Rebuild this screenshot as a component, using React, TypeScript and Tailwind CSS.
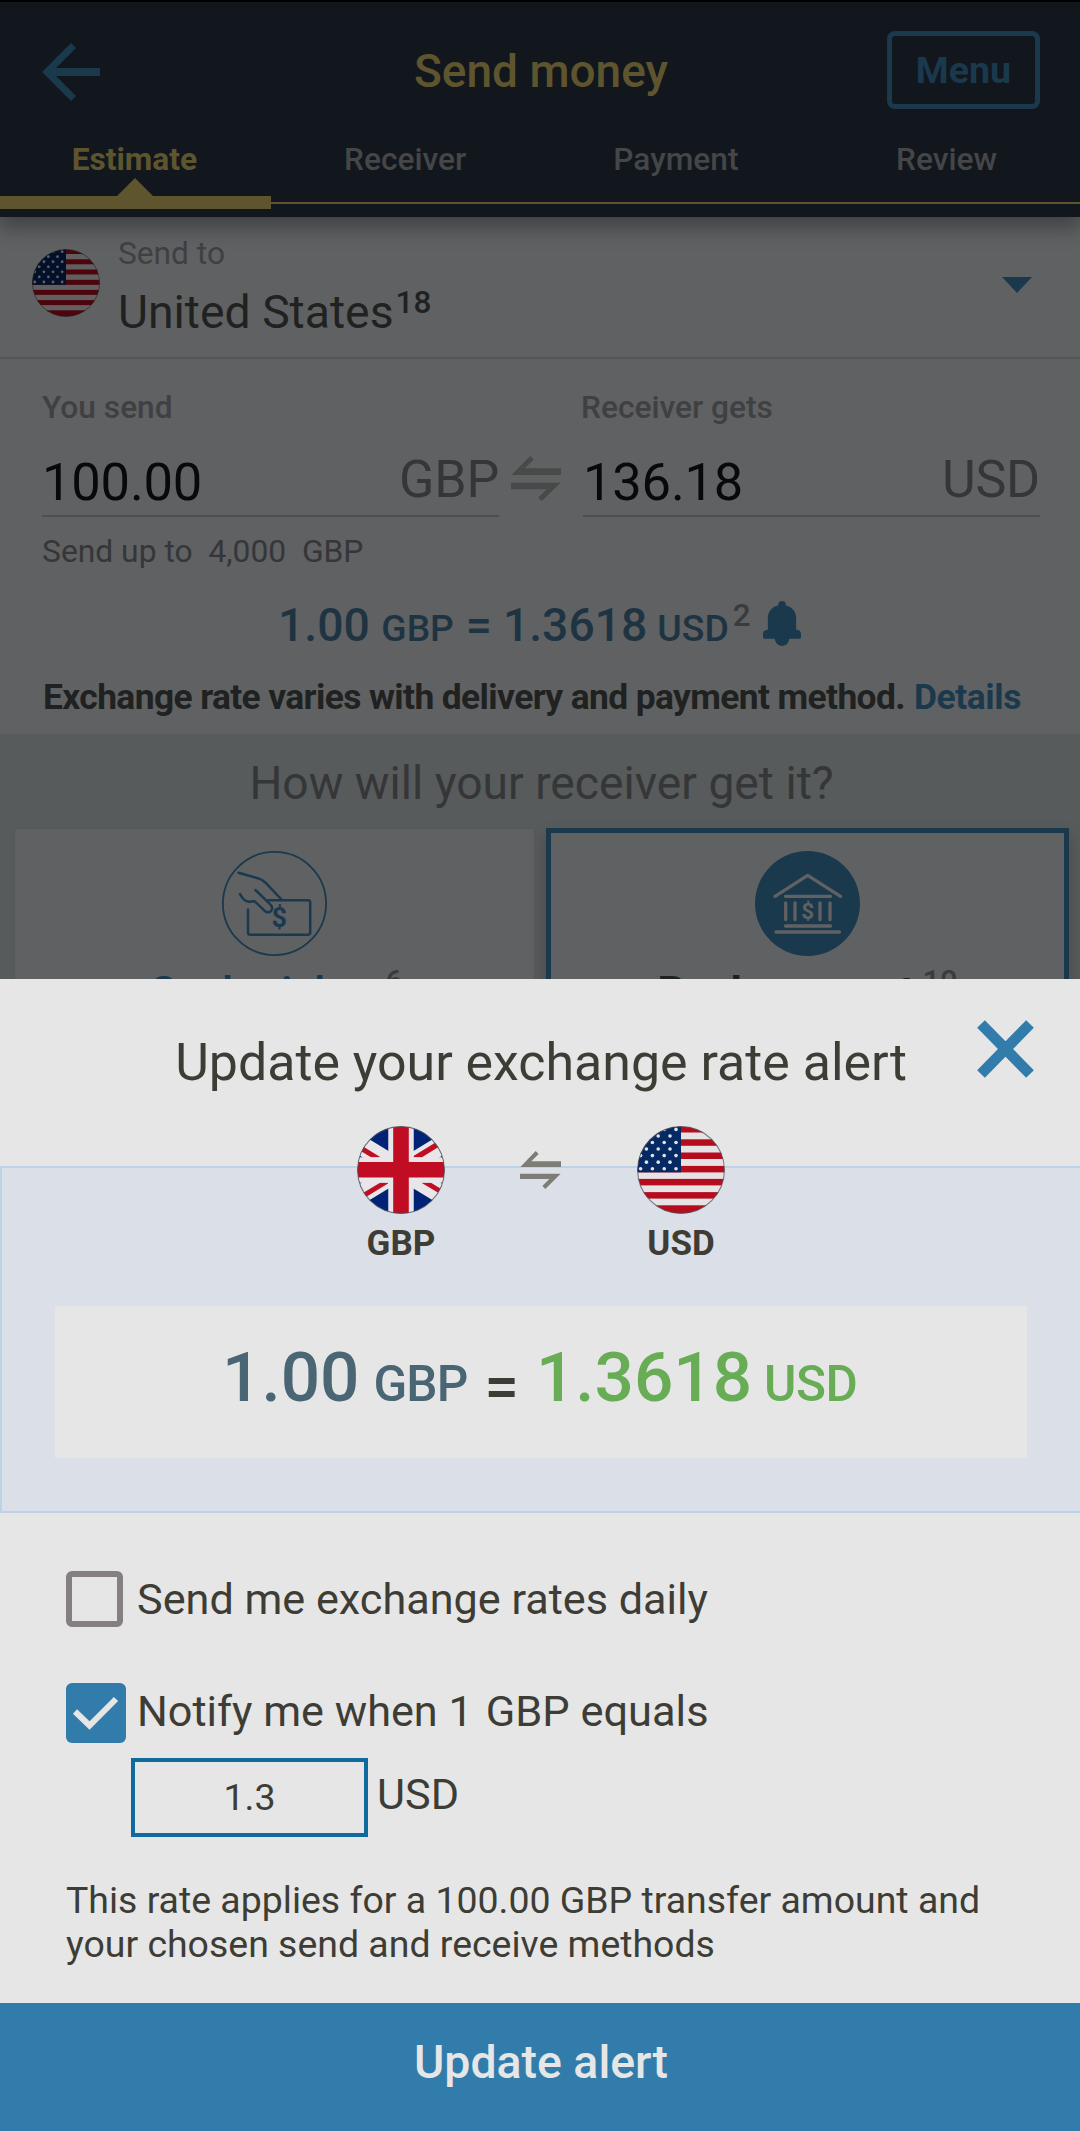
import type { ReactNode } from "react";

function UsFlag({ className }: { className: string }) {
  const stripes = [0, 13.3, 26.5, 39.9, 52.9, 66.1, 79.3];
  const rows = [0, 1, 2, 3, 4, 5, 6];
  return (
    <svg viewBox="0 0 88 88" className={className}>
      <clipPath id="us-clip">
        <circle cx="44" cy="44" r="43.5" />
      </clipPath>
      <g clipPath="url(#us-clip)">
        <rect width="88" height="88" fill="#e6e3e5" />
        {stripes.map((y) => (
          <rect key={y} y={y} width="88" height={y > 79 ? 9 : 6.5} fill="#b60d1e" />
        ))}
        <rect width="44" height="46.3" fill="#052962" />
        {rows.map((r) =>
          [0, 1, 2, 3]
            .filter((c) => r % 2 === 0 || c < 3)
            .map((c) => (
              <circle
                key={`${r}-${c}`}
                cx={(r % 2 === 0 ? 3.6 : 9.4) + c * 11.8}
                cy={3.4 + r * 6.55}
                r="1.8"
                fill="#dfe3ea"
              />
            ))
        )}
      </g>
      <circle cx="44" cy="44" r="43.4" fill="none" stroke="#4a4d55" strokeOpacity="0.7" strokeWidth="1.1" />
    </svg>
  );
}

function UkFlag({ className }: { className: string }) {
  return (
    <svg viewBox="0 0 88 88" className={className}>
      <clipPath id="uk-clip">
        <circle cx="44" cy="44" r="43.5" />
      </clipPath>
      <g clipPath="url(#uk-clip)">
        <rect width="88" height="88" fill="#002376" />
        <path d="M-6 13.2 L94 74.2 M94 13.2 L-6 74.2" stroke="#e8e6e8" strokeWidth="19" />
        <path
          d="M-6 13.2 L24 31.5 H14.5 L-6 19 Z M94 13.2 L64.5 31.5 H54 V31.5 L94 7.2 Z M94 74.2 L64 56.5 H73.5 L94 68.8 Z M-6 74.2 L23.5 56.5 H31 V57.5 L-6 80.2 Z"
          fill="#c20d22"
        />
        <path d="M44 0 V88 M0 43.9 H88" stroke="#e8e6e8" strokeWidth="25.5" />
        <path d="M44 0 V88 M0 43.7 H88" stroke="#c00d24" strokeWidth="15.6" />
      </g>
      <circle cx="44" cy="44" r="43.4" fill="none" stroke="#4a4d55" strokeOpacity="0.7" strokeWidth="1.1" />
    </svg>
  );
}

function SwapIcon({ className }: { className: string }) {
  return (
    <svg viewBox="0 0 123 114" preserveAspectRatio="none" className={className} fill="currentColor">
      <path d="M1 48 L47 0 L56 9 L34 31 H123 V48 Z" />
      <path d="M122 68 L76 114 L67 105 L88 84 H0 V68 Z" />
    </svg>
  );
}

function BellIcon() {
  return (
    <svg viewBox="0 0 110 132" preserveAspectRatio="none" className="h-[45px] w-[38px]" fill="currentColor">
      <circle cx="55" cy="11" r="11" />
      <path d="M14 84 V50 C14 28 31 12 55 12 S96 28 96 50 V84 C104 84 110 88 110 96 V106 Q110 111 105 111 H5 Q0 111 0 106 V96 C0 88 6 84 14 84 Z" />
      <path d="M34 108 C34 122 43 132 55 132 S76 122 76 108 Z" />
    </svg>
  );
}

function CashIcon() {
  return (
    <svg viewBox="0 0 105 105" className="size-[105px] text-[#1b394d]" fill="none" stroke="currentColor">
      <circle cx="52.5" cy="52.5" r="51.6" strokeWidth="1.8" />
      <g strokeWidth="2.5" strokeLinecap="round" strokeLinejoin="round">
        <path d="M16.5 21.7 L37 27.6 Q40 28.5 43 31.2 L59.5 48.5" />
        <path d="M46.5 49.3 H86 Q88.2 49.3 88.2 51.5 V81.5 Q88.2 83.7 86 83.7 H28.2 Q26 83.7 26 81.5 V58.5" />
        <path d="M18 43 C20 47 22.5 50.5 27 50.8 L32.7 50.3 L42.5 59.7 Q46 62.6 49 60 Q51.6 57 48.5 53.6 L33.5 39" />
      </g>
      <text x="57.2" y="76.3" textAnchor="middle" fill="currentColor" stroke="none" className="font-[Roboto] text-[27px] font-bold">
        $
      </text>
    </svg>
  );
}

function BankIcon() {
  return (
    <svg viewBox="0 0 105 105" className="size-[105px]" fill="none" stroke="#606163">
      <circle cx="52.5" cy="52.5" r="52.5" fill="#1b394d" stroke="none" />
      <path
        d="M20 45.3 L52.7 24.3 L85.5 45.3 M30.5 45.3 H75.5 M30.7 52 V68.5 M40 52 V68.5 M65 52 V68.5 M75 52 V68.5 M30.5 75 H75.5 M21 81 H84.5"
        strokeWidth="3.3"
        strokeLinecap="round"
        strokeLinejoin="round"
      />
      <text x="52.8" y="68" textAnchor="middle" fill="#606163" stroke="none" className="font-[Roboto] text-[22.5px] font-bold">
        $
      </text>
    </svg>
  );
}

function Tab({ label, active = false }: { label: string; active?: boolean }) {
  return (
    <div className="relative flex flex-col">
      <div
        className={
          active
            ? "h-[58px] pr-[2px] text-center text-[31.7px] leading-[43px] font-bold text-[#5e552f]"
            : "h-[58px] pr-[2px] text-center text-[31.7px] leading-[43px] font-medium text-[#444647]"
        }
      >
        {label}
      </div>
      {active ? (
        <>
          <div className="h-[13px] bg-[#5e552f]" />
          <svg viewBox="0 0 36 18" className="absolute top-[40px] left-[117px] h-[18px] w-[36px]">
            <path d="M0 18 L18 0 L36 18 Z" fill="#5e552f" />
          </svg>
        </>
      ) : (
        <div className="mt-[6px] h-[2px] bg-[#5e552f]" />
      )}
    </div>
  );
}

function AmountField({ label, value, currency }: { label: ReactNode; value: string; currency: string }) {
  return (
    <div className="w-[457px]">
      <div className="text-[31.7px] leading-[36px] font-medium text-[#3f4042]">{label}</div>
      <div className="flex h-[91px] items-end justify-between border-b-2 border-[#4e4f50]">
        <span className="pb-[3px] text-[52.5px] leading-[60px] tracking-[-0.2px] text-[#070a0c]">{value}</span>
        <span className="pb-[5px] text-[52px] leading-[60px] tracking-[-0.2px] text-[#353638]">{currency}</span>
      </div>
    </div>
  );
}

function CurrencyBadge({ flag, code }: { flag: ReactNode; code: string }) {
  return (
    <div className="flex w-[88px] flex-col items-center">
      {flag}
      <div className="mt-[10px] text-[35px] leading-[40px] font-bold text-[#3d3d36]">{code}</div>
    </div>
  );
}

export default function App() {
  return (
    <div className="relative flex h-[2131px] w-[1080px] flex-col overflow-hidden bg-[#606163] font-[Roboto,sans-serif] whitespace-nowrap">
      <header className="relative z-10 h-[217px] shrink-0 border-t-2 border-black bg-[#12171e] shadow-[0_8px_20px_2px_rgba(0,0,0,0.35)]">
        <div className="flex h-[136px] items-center justify-between pr-[40px] pl-[42px]">
          <div className="w-[153px]">
            <svg viewBox="0 0 58 58" className="mt-[3px] size-[58px]" fill="none" stroke="#1b394d">
              <path d="M31.5 2.5 L5 29 L31.5 55.5" strokeWidth="7" />
              <path d="M4 29 H58" strokeWidth="7.8" />
            </svg>
          </div>
          <h1 className="pt-[2px] text-[46px] leading-[54px] font-medium text-[#5e552f]">Send money</h1>
          <button className="h-[78px] w-[153px] rounded-[8px] border-[5px] border-[#1b394d] text-[37.6px] leading-[65px] font-bold text-[#1b394d]">
            Menu
          </button>
        </div>
        <nav className="grid w-[1083px] grid-cols-4">
          <Tab label="Estimate" active />
          <Tab label="Receiver" />
          <Tab label="Payment" />
          <Tab label="Review" />
        </nav>
      </header>

      <section className="flex h-[142px] shrink-0 border-b-2 border-[#555658] pr-[48px] pl-8">
        <UsFlag className="mt-[32px] size-[68px] brightness-[0.42]" />
        <div className="ml-[18px] pt-[19px]">
          <div className="text-[31.7px] leading-[36px] text-[#3f4042]">Send to</div>
          <div className="mt-[13px] flex text-[#202121]">
            <span className="text-[46.3px] leading-[54px]">United States</span>
            <span className="ml-[2px] text-[31.5px] leading-[36px] font-medium">18</span>
          </div>
        </div>
        <svg viewBox="0 0 30 16" className="mt-[60px] ml-auto h-[16px] w-[30px]">
          <path d="M0 0 H30 L15 16 Z" fill="#1b394d" />
        </svg>
      </section>

      <section className="h-[375px] shrink-0 pt-[31px] pl-[42px]">
        <div className="flex">
          <AmountField label="You send" value="100.00" currency="GBP" />
          <SwapIcon className="mt-[66px] mr-[22px] ml-[12px] h-[45px] w-[50px] text-[#474a48]" />
          <AmountField label={<span className="-ml-[2px]">Receiver gets</span>} value="136.18" currency="USD" />
        </div>
        <div className="mt-[16px] text-[31.8px] leading-[37px] whitespace-pre text-[#353638]">{"Send up to  4,000  GBP"}</div>
        <div className="mt-[28px] flex h-[54px] pl-[236px] text-[#1f3442]">
          <div className="flex items-baseline text-[46.3px] leading-[54px] font-medium">
            <span>1.00</span>
            <span className="ml-[11.5px] text-[37.2px]">GBP</span>
            <span className="ml-[12px]">=</span>
            <span className="ml-[11px]">1.3618</span>
            <span className="ml-[10px] text-[37.4px]">USD</span>
          </div>
          <span className="ml-[4px] text-[31.5px] leading-[36px] font-medium text-[#3a3b3c]">2</span>
          <div className="mt-[3px] ml-[12px] text-[#1b394d]">
            <BellIcon />
          </div>
        </div>
        <div className="mt-[23px] flex pl-[1px] text-[35.4px] leading-[44px] font-bold tracking-[-0.62px]">
          <span className="text-[#202121]">Exchange rate varies with delivery and payment method.</span>
          <a className="ml-[9px] tracking-[-0.4px] text-[#1b394d]">Details</a>
        </div>
      </section>

      <section className="h-[400px] shrink-0 bg-[#575b5b] pt-[20px]">
        <h2 className="pl-[3px] text-center text-[46.2px] leading-[59px] text-[#353638]">How will your receiver get it?</h2>
        <div className="mt-[15px] flex gap-[11px] pl-[14px]">
          <div className="flex h-[300px] w-[521px] flex-col items-center border border-[#555859] bg-[#606163] pt-[22px]">
            <CashIcon />
            <div className="mt-[10px] flex pl-[2px] text-[#1b394d]">
              <span className="text-[45px] leading-[54px] font-medium tracking-[-0.9px]">Cash pickup</span>
              <span className="text-[31px] leading-[31px] font-medium text-[#3a3b3c]">6</span>
            </div>
          </div>
          <div className="flex h-[300px] w-[523px] flex-col items-center border-[5px] border-[#1b394d] bg-[#606163] pt-[18px] shadow-[0_8px_16px_rgba(0,0,0,0.2)]">
            <BankIcon />
            <div className="mt-[10px] flex text-[#202121]">
              <span className="text-[45px] leading-[54px] font-bold tracking-[-1.6px]">Bank account</span>
              <span className="ml-[9px] text-[31px] leading-[31px] font-medium text-[#3a3b3c]">10</span>
            </div>
          </div>
        </div>
      </section>

      <div role="dialog" className="absolute inset-x-0 bottom-0 z-20 flex h-[1152px] flex-col bg-[#e6e6e6] text-[#3d3d36]">
        <button aria-label="Close" className="absolute top-[41px] right-[46.5px]">
          <svg viewBox="0 0 57 58" className="h-[58px] w-[57px]" stroke="#327cab" strokeWidth="10.8">
            <path d="M4 4 L53 54 M53 4 L4 54" />
          </svg>
        </button>
        <div className="h-[187px] shrink-0 pt-[52px] pl-[2px] text-center text-[51.9px] leading-[64px]">
          Update your exchange rate alert
        </div>

        <div className="h-[347px] shrink-0 border-y-2 border-l-2 border-[#bbd2e7] bg-[#dbdfe7]">
          <div className="mt-[-42px] flex items-start pl-[355px]">
            <CurrencyBadge flag={<UkFlag className="size-[88px]" />} code="GBP" />
            <SwapIcon className="mt-[25px] mr-[76px] ml-[75px] h-[38px] w-[41px] text-[#7d7c77]" />
            <CurrencyBadge flag={<UsFlag className="size-[88px]" />} code="USD" />
          </div>
          <div className="mt-[42px] ml-[53px] flex h-[152px] w-[972px] items-baseline bg-[#e6e6e6] pt-[22px] pl-[167px] leading-[100px] font-medium">
            <span className="text-[69.3px] text-[#4a6675]">1.00</span>
            <span className="ml-[14px] text-[49.5px] tracking-[-0.8px] text-[#4a6675]">GBP</span>
            <span className="relative top-[7px] ml-[17px] text-[61px]">=</span>
            <span className="ml-[17px] text-[69.3px] text-[#68ad55]">1.3618</span>
            <span className="ml-[12px] text-[49.5px] tracking-[-0.5px] text-[#68ad55]">USD</span>
          </div>
        </div>

        <div className="flex flex-1 flex-col pl-[66px]">
          <label className="mt-[58px] flex h-[56px] items-center">
            <span className="h-[56px] w-[57px] rounded-[6px] border-[6px] border-[#858080]" />
            <span className="ml-[14px] pt-[1px] text-[43.2px] leading-[56px]">Send me exchange rates daily</span>
          </label>
          <label className="mt-[56px] flex h-[60px]">
            <span className="size-[60px] rounded-[6px] bg-[#327cab]">
              <svg viewBox="0 0 60 60" className="size-[60px]" fill="none" stroke="#e6e6e6" strokeWidth="6">
                <path d="M9 28.5 L23.5 42.5 L50 16" />
              </svg>
            </span>
            <span className="ml-[11px] text-[43.2px] leading-[58px]">Notify me when 1</span>
            <span className="ml-[13px] text-[43.4px] leading-[58px]">GBP equals</span>
          </label>
          <div className="mt-[15px] ml-[65px] flex h-[79px]">
            <div className="h-[79px] w-[237px] border-4 border-[#116a9e] text-center text-[37.5px] leading-[71px]">1.3</div>
            <span className="ml-[9px] text-[43.2px] leading-[73px]">USD</span>
          </div>
          <p className="mt-[41px] text-[37.45px] leading-[44px]">
            This rate applies for a 100.00 GBP transfer amount and
            <br />
            your chosen send and receive methods
          </p>
        </div>

        <button className="h-[128px] shrink-0 bg-[#327cab] pb-[9px] pl-[2px] text-[46.4px] font-medium text-[#e6e6e6]">
          Update alert
        </button>
      </div>
    </div>
  );
}
